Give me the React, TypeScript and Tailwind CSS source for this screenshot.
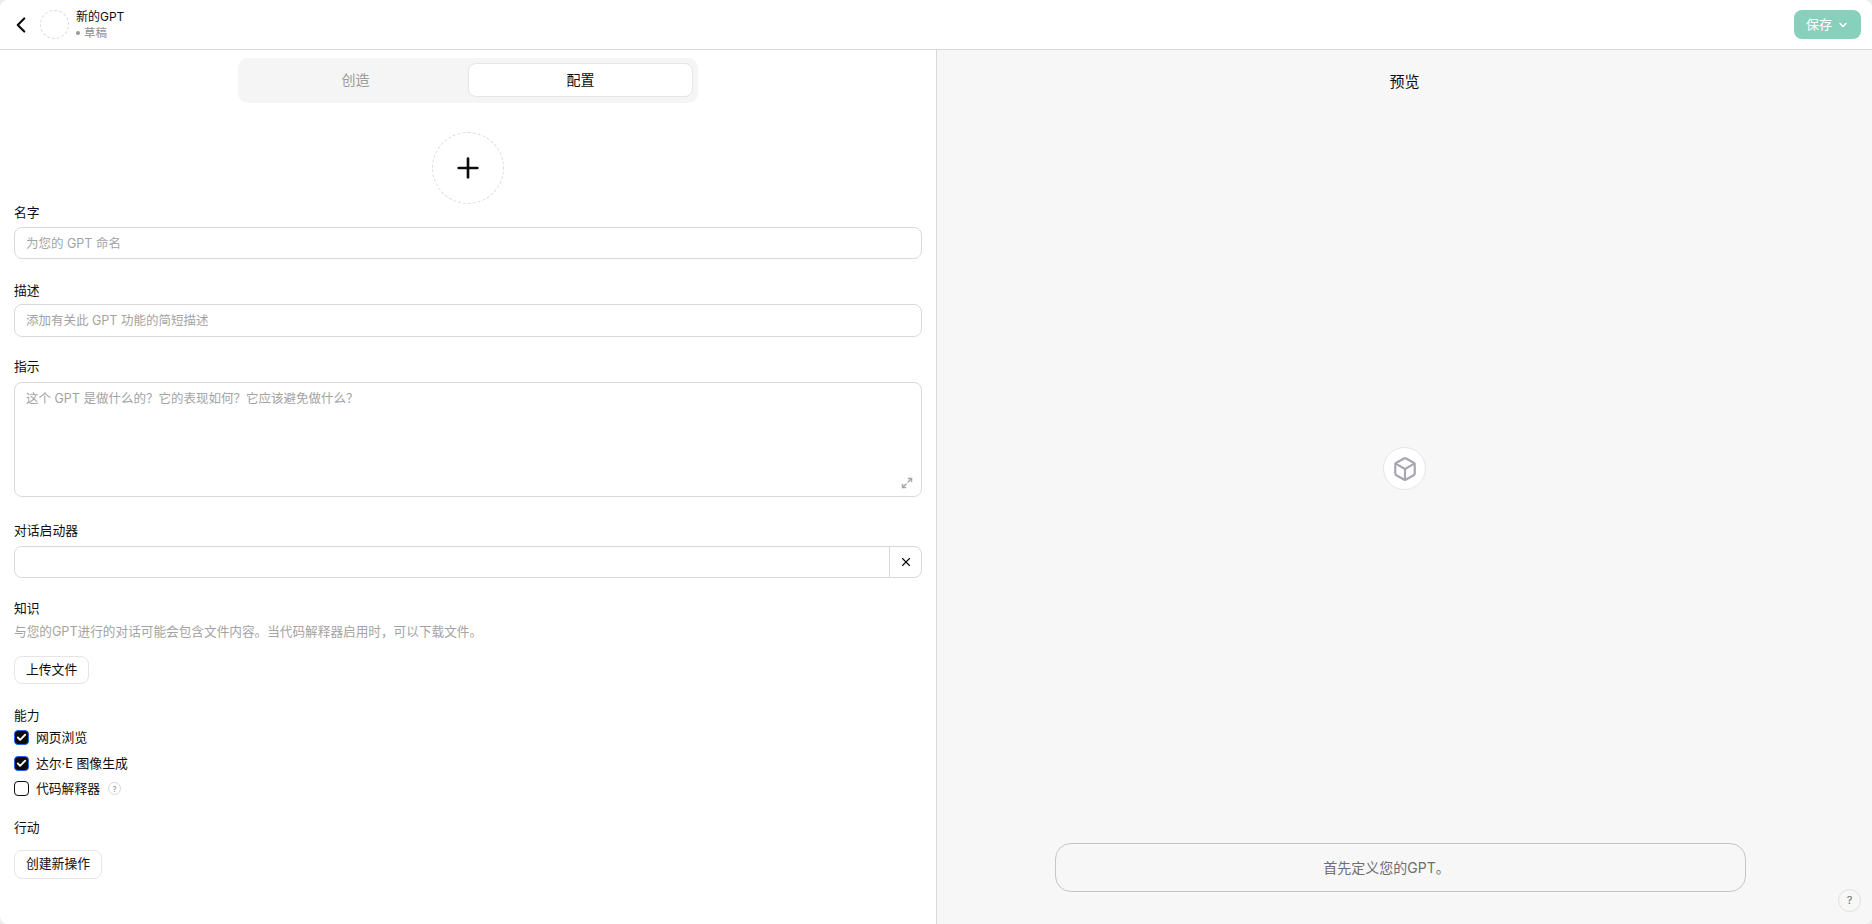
import { ChevronLeft, ChevronDown, Plus, X, Check, Box, Maximize2 } from 'lucide-react';

const font = { fontFamily: '"Inter", "Noto Sans CJK SC", sans-serif' };

const Label = ({ children }: { children: React.ReactNode }) => (
  <div className="text-[12.8px] leading-[18px] text-[#0d0d0d]">{children}</div>
);

const TextField = ({ placeholder, height }: { placeholder: string; height: string }) => (
  <input
    placeholder={placeholder}
    className={`${height} w-full rounded-lg border border-[#d9d9d9] bg-white px-[11px] text-[12.5px] outline-none placeholder:text-[#a3a3a3]`}
  />
);

const SmallButton = ({ children, height }: { children: React.ReactNode; height: string }) => (
  <button className={`${height} rounded-lg border border-[#e5e5e5] bg-white px-[11px] text-[12.8px] text-[#0d0d0d]`}>
    {children}
  </button>
);

const Capability = ({ label, checked, help }: { label: string; checked?: boolean; help?: boolean }) => (
  <label className="flex h-[25.5px] items-center gap-[7px] text-[12.8px] text-[#0d0d0d]">
    <span
      className={`flex h-[15px] w-[15px] items-center justify-center rounded-[4px] border ${
        checked ? 'border-[#2563eb] bg-[#0d0d0d]' : 'border-[#0d0d0d] bg-white'
      }`}
    >
      {checked && <Check size={11} strokeWidth={4} className="text-white" />}
    </span>
    {label}
    {help && (
      <span className="ml-[1px] flex h-[13px] w-[13px] items-center justify-center rounded-full border border-[#d9d9d9] text-[8px] text-[#8e8e8e]">
        ?
      </span>
    )}
  </label>
);

export default function App() {
  return (
    <div className="h-[924px] w-[1872px] bg-[#ececec]">
      <div style={font} className="flex h-full w-full flex-col overflow-hidden rounded-lg bg-white">
        {/* Header */}
        <header className="flex h-[50px] shrink-0 items-center justify-between border-b border-[#d9d9d9] pl-[8px] pr-[11px]">
          <div className="flex items-center">
            <ChevronLeft size={26} strokeWidth={2} className="text-[#0d0d0d]" />
            <div className="ml-[6px] h-[29px] w-[29px] rounded-full border border-dashed border-[#d9d9d9]" />
            <div className="ml-[7px]">
              <div className="text-[12px] leading-[16px] text-[#0d0d0d]">新的GPT</div>
              <div className="mt-[1px] flex items-center gap-[4px] text-[11.5px] leading-[14px] text-[#8e8e8e]">
                <span className="h-[4px] w-[4px] rounded-full bg-[#9a96a0]" />
                草稿
              </div>
            </div>
          </div>
          <button className="flex h-[29px] w-[67px] items-center justify-center gap-[5px] rounded-lg bg-[#87d0bc] text-[13px] text-white">
            保存
            <ChevronDown size={12} strokeWidth={3} />
          </button>
        </header>

        <div className="flex min-h-0 flex-1">
          {/* Left: config form */}
          <div className="w-[937px] shrink-0 border-r border-[#d9d9d9] px-[14px]">
            <div className="mx-auto mt-[8px] flex h-[45px] w-[460px] items-center rounded-[10px] bg-[#f5f5f5] pb-[1px] pl-[5px] pr-[5px]">
              <div className="flex-1 pb-[1px] text-center text-[14px] text-[#9b9b9b]">创造</div>
              <div className="flex h-[34px] w-[225px] items-center justify-center rounded-lg border border-[#e5e5e5] bg-white pb-[1px] text-[14px] text-[#0d0d0d]">
                配置
              </div>
            </div>

            <div className="mt-[29px] flex justify-center">
              <div className="flex h-[72px] w-[72px] items-center justify-center rounded-full border border-dashed border-[#d9d9d9] pb-[1px]">
                <Plus size={32} strokeWidth={2} className="text-[#0d0d0d]" />
              </div>
            </div>

            <Label>名字</Label>
            <div className="mt-[5px]">
              <TextField height="h-[32px]" placeholder="为您的 GPT 命名" />
            </div>

            <div className="mt-[23px]">
              <Label>描述</Label>
            </div>
            <div className="mt-[4px]">
              <TextField height="h-[33px]" placeholder="添加有关此 GPT 功能的简短描述" />
            </div>

            <div className="mt-[21px]">
              <Label>指示</Label>
            </div>
            <div className="relative mt-[6px]">
              <textarea
                placeholder="这个 GPT 是做什么的？它的表现如何？它应该避免做什么？"
                className="block h-[115px] w-full resize-none rounded-lg border border-[#d9d9d9] bg-white px-[11px] py-[7px] text-[12.5px] outline-none placeholder:text-[#a3a3a3]"
              />
              <Maximize2 size={12} strokeWidth={3} className="absolute bottom-[8px] right-[9px] text-[#a8a4ae]" />
            </div>

            <div className="mt-[25px]">
              <Label>对话启动器</Label>
            </div>
            <div className="mt-[6px] flex h-[32px] rounded-lg border border-[#d9d9d9]">
              <input className="min-w-0 flex-1 rounded-l-lg bg-white px-[11px] text-[13px] outline-none" />
              <button className="flex w-[32px] items-center justify-center border-l border-[#d9d9d9]">
                <X size={14} strokeWidth={2} className="text-[#0d0d0d]" />
              </button>
            </div>

            <div className="mt-[22px]">
              <Label>知识</Label>
            </div>
            <div className="mt-[5px] text-[12.65px] leading-[18px] text-[#a3a3a3]">
              与您的GPT进行的对话可能会包含文件内容。当代码解释器启用时，可以下载文件。
            </div>
            <div className="mt-[15px] flex">
              <SmallButton height="h-[28px]">上传文件</SmallButton>
            </div>

            <div className="mt-[23px]">
              <Label>能力</Label>
            </div>
            <div className="flex flex-col">
              <Capability label="网页浏览" checked />
              <Capability label="达尔·E 图像生成" checked />
              <Capability label="代码解释器" help />
            </div>

            <div className="mt-[17px]">
              <Label>行动</Label>
            </div>
            <div className="mt-[13px] flex">
              <SmallButton height="h-[29px]">创建新操作</SmallButton>
            </div>
          </div>

          {/* Right: preview */}
          <div className="relative flex min-w-0 flex-1 flex-col items-center bg-[#f7f7f7]">
            <div className="mt-[22px] text-[15px] leading-[20px] text-[#0d0d0d]">预览</div>
            <div className="mt-[355px] flex h-[43px] w-[43px] items-center justify-center rounded-full border border-[#e5e5e5] bg-white">
              <Box size={26} strokeWidth={2} className="text-[#a8a4b4]" />
            </div>
            <div className="mb-[32px] mr-[8px] mt-auto flex h-[49px] w-[691px] items-center justify-center rounded-2xl border border-[#c5c5c5] pr-[28px] text-[14px] text-[#6e6e6e]">
              首先定义您的GPT。
            </div>
            <div className="absolute bottom-[12px] right-[11px] flex h-[23px] w-[23px] items-center justify-center rounded-full border border-[#e0e0e0] text-[11px] text-[#6e6e6e]">
              ?
            </div>
          </div>
        </div>
      </div>
    </div>
  );
}
